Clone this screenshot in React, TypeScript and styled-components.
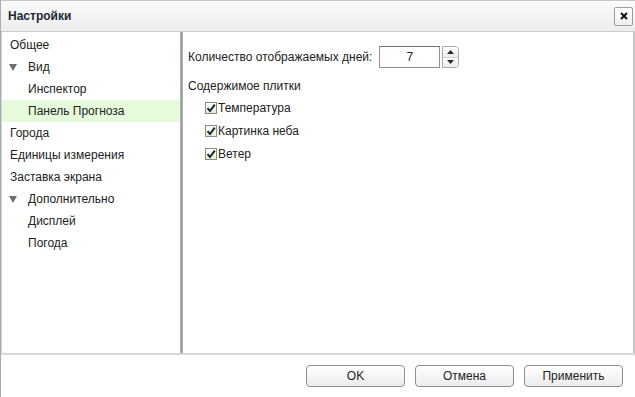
import styled, { createGlobalStyle } from 'styled-components';

const GlobalStyle = createGlobalStyle`
  html, body {
    margin: 0;
    padding: 0;
    background: #ffffff;
  }
  body {
    font-family: 'Liberation Sans', Arial, sans-serif;
    font-size: 12px;
    color: #222222;
  }
`;

const treeItems = [
  { label: 'Общее', level: 0 },
  { label: 'Вид', level: 0, expanded: true },
  { label: 'Инспектор', level: 1 },
  { label: 'Панель Прогноза', level: 1, selected: true },
  { label: 'Города', level: 0 },
  { label: 'Единицы измерения', level: 0 },
  { label: 'Заставка экрана', level: 0 },
  { label: 'Дополнительно', level: 0, expanded: true },
  { label: 'Дисплей', level: 1 },
  { label: 'Погода', level: 1 },
];

const tileOptions = ['Температура', 'Картинка неба', 'Ветер'];

const CheckIcon = () => (
  <svg width="10" height="10" viewBox="0 0 10 10">
    <path d="M1.5 5.2 L4 8 L8.8 1.6" fill="none" stroke="#1c2530" strokeWidth="2" />
  </svg>
);

const Arrow = ({ up }: { up?: boolean }) => (
  <svg width="7" height="4" viewBox="0 0 7 4">
    <path d={up ? 'M0 4 L3.5 0 L7 4 Z' : 'M0 0 L3.5 4 L7 0 Z'} fill="#2a2a2a" />
  </svg>
);

const App = () => (
  <>
    <GlobalStyle />
    <Window>
      <TitleBar>
        <Title>Настройки</Title>
        <CloseButton>
          <svg width="8" height="8" viewBox="0 0 8 8">
            <path d="M1 1 L7 7 M7 1 L1 7" stroke="#111" strokeWidth="2" />
          </svg>
        </CloseButton>
      </TitleBar>
      <Body>
        <Sidebar>
          {treeItems.map(({ label, level, expanded, selected }) => (
            <TreeRow key={label} $indent={level > 0 || !!expanded} $selected={!!selected}>
              {expanded && <Expander />}
              {label}
            </TreeRow>
          ))}
        </Sidebar>
        <Splitter />
        <Content>
          <FieldRow>
            <span>Количество отображаемых дней:</span>
            <NumberBox>7</NumberBox>
            <Spinner>
              <SpinButton>
                <Arrow up />
              </SpinButton>
              <SpinButton>
                <Arrow />
              </SpinButton>
            </Spinner>
          </FieldRow>
          <GroupLabel>Содержимое плитки</GroupLabel>
          <CheckList>
            {tileOptions.map((option) => (
              <CheckRow key={option}>
                <CheckBox>
                  <CheckIcon />
                </CheckBox>
                {option}
              </CheckRow>
            ))}
          </CheckList>
        </Content>
      </Body>
      <Footer>
        <Button>OK</Button>
        <Button>Отмена</Button>
        <Button>Применить</Button>
      </Footer>
    </Window>
  </>
);

export default App;

const Window = styled('div')`
  width: 635px;
  height: 397px;
  box-sizing: border-box;
  border-left: 1px solid #a9adb0;
  border-top: 1px solid #c4c6c8;
  display: flex;
  flex-direction: column;
  background: #ffffff;
`;

const TitleBar = styled('div')`
  height: 30px;
  flex-shrink: 0;
  display: flex;
  align-items: center;
  justify-content: space-between;
  padding: 0 2px 0 7px;
  background: linear-gradient(#fbfbfb, #ececec);
  border-bottom: 1px solid #c9cbcd;
`;

const Title = styled('span')`
  font-weight: bold;
  font-size: 12px;
  color: #1b2a33;
`;

const CloseButton = styled('div')`
  width: 17px;
  height: 17px;
  border: 1px solid #9a9ea2;
  border-radius: 2px;
  background: linear-gradient(#ffffff, #eeeeee);
  display: flex;
  align-items: center;
  justify-content: center;
`;

const Body = styled('div')`
  height: 323px;
  display: flex;
  border-bottom: 2px solid #d6d8da;
  box-sizing: border-box;
`;

const Sidebar = styled('div')`
  width: 179px;
  box-sizing: border-box;
  border-left: 1px solid #d3d5d7;
  padding-top: 2px;
`;

const TreeRow = styled('div')<{ $indent: boolean; $selected: boolean }>`
  position: relative;
  height: 22px;
  line-height: 22px;
  padding-left: ${({ $indent }) => ($indent ? 26 : 8)}px;
  background: ${({ $selected }) => ($selected ? '#e6fbdb' : 'transparent')};
  white-space: nowrap;
`;

const Expander = styled('span')`
  position: absolute;
  left: 7px;
  top: 8px;
  width: 0;
  height: 0;
  border-left: 4px solid transparent;
  border-right: 4px solid transparent;
  border-top: 7px solid #6b6e70;
`;

const Splitter = styled('div')`
  width: 3px;
  background: linear-gradient(90deg, #b4b8bb, #9a9ea1, #b4b8bb);
`;

const Content = styled('div')`
  flex: 1;
  padding: 14px 0 0 5px;
  border-right: 2px solid #c3c5c7;
`;

const FieldRow = styled('div')`
  display: flex;
  align-items: center;
  height: 22px;
  gap: 2px;
`;

const NumberBox = styled('div')`
  width: 59px;
  height: 20px;
  margin-left: 5px;
  border: 1px solid #8e9194;
  border-top-color: #6f7275;
  text-align: center;
  line-height: 20px;
`;

const Spinner = styled('div')`
  width: 15px;
  height: 20px;
  border: 1px solid #a7aaad;
  border-radius: 0 4px 4px 0;
  display: flex;
  flex-direction: column;
  overflow: hidden;
`;

const SpinButton = styled('div')`
  flex: 1;
  display: flex;
  align-items: center;
  justify-content: center;
  background: linear-gradient(#ffffff, #ececec);
  & + & {
    border-top: 1px solid #cfd1d3;
  }
`;

const GroupLabel = styled('div')`
  margin-top: 7px;
  height: 22px;
  line-height: 22px;
`;

const CheckList = styled('div')`
  display: flex;
  flex-direction: column;
  padding-left: 17px;
  margin-top: -1px;
`;

const CheckRow = styled('div')`
  display: flex;
  align-items: center;
  height: 23px;
`;

const CheckBox = styled('span')`
  width: 10px;
  height: 10px;
  margin-right: 1px;
  border: 1px solid #7f9477;
  background: linear-gradient(#ffffff, #dfeed6);
  display: flex;
  align-items: center;
  justify-content: center;
`;

const Footer = styled('div')`
  flex: 1;
  display: flex;
  justify-content: flex-end;
  align-items: center;
  gap: 10px;
  padding: 0 12px 0 0;
`;

const Button = styled('button')`
  width: 99px;
  height: 22px;
  border: 1px solid #8d9093;
  border-radius: 4px;
  background: linear-gradient(#ffffff, #ececec);
  font-family: 'Liberation Sans', Arial, sans-serif;
  font-size: 12px;
  color: #222222;
  padding: 0;
`;
